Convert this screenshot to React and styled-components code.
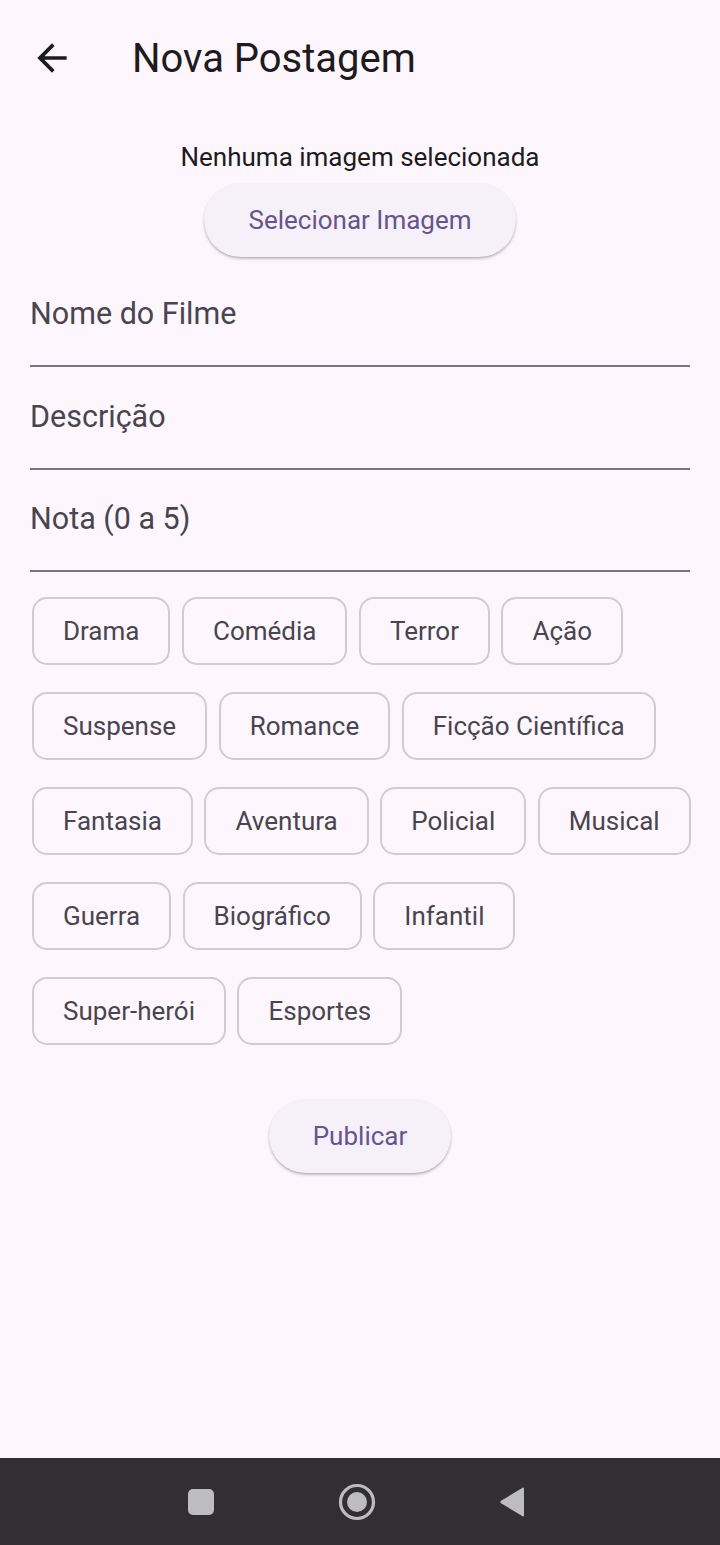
import React from "react";
import styled, { createGlobalStyle } from "styled-components";

const Global = createGlobalStyle`
  html, body { margin: 0; padding: 0; background: #FDF7FD; }
  body { font-family: Roboto, "Noto Sans", "Liberation Sans", sans-serif; -webkit-font-smoothing: antialiased; }
  #root { min-height: 100vh; }
`;

const Screen = styled.div`
  width: 720px;
  min-height: 1545px;
  display: flex;
  flex-direction: column;
  background: #FDF7FD;
`;

const AppBar = styled.header`
  height: 116px;
  display: flex;
  align-items: center;
  padding-left: 30px;
  box-sizing: border-box;
`;

const BackButton = styled.button`
  width: 44px;
  height: 44px;
  padding: 0;
  border: none;
  background: transparent;
  display: flex;
  align-items: center;
  justify-content: center;
  color: #1D1B20;
`;

const Title = styled.h1`
  margin: 0 0 0 58px;
  font-size: 40px;
  font-weight: 400;
  color: #1D1B20;
  letter-spacing: 0;
`;

const Body = styled.main`
  display: flex;
  flex-direction: column;
  padding: 0 30px;
`;

const ImageStatus = styled.p`
  margin: 22px 0 0;
  text-align: center;
  font-size: 26px;
  line-height: 38px;
  color: #1D1B20;
`;

const PillButton = styled.button`
  align-self: center;
  height: 74px;
  padding: 0 44px;
  border: none;
  border-radius: 37px;
  background: #F6F0F8;
  color: #65558F;
  font-family: Roboto, "Noto Sans", sans-serif;
  font-size: 26px;
  font-weight: 400;
  box-shadow: 0 2px 3px rgba(0, 0, 0, 0.22), 0 1px 1px rgba(0, 0, 0, 0.08);
  margin-top: ${(p) => p.$mt || 0}px;
`;

const Field = styled.div`
  height: 102.5px;
  display: flex;
  align-items: center;
  border-bottom: 2px solid #7A757F;
  box-sizing: border-box;
  margin-top: ${(p) => p.$mt || 0}px;
`;

const FieldLabel = styled.span`
  font-size: 30.5px;
  color: #49454F;
  padding-bottom: 2px;
`;

const ChipWrap = styled.div`
  display: flex;
  flex-wrap: wrap;
  column-gap: 11.5px;
  row-gap: 27px;
  margin: 25px -6px 0 0;
  padding-left: 2px;
`;

const Chip = styled.div`
  height: 68px;
  box-sizing: border-box;
  padding: 0 29px;
  border: 2px solid #D2CBD3;
  border-radius: 15px;
  display: flex;
  align-items: center;
  font-size: 26px;
  color: #49454F;
`;

const NavBar = styled.nav`
  margin-top: auto;
  height: 87px;
  background: #322F34;
  display: flex;
  align-items: center;
  justify-content: center;
  padding-right: 6px;
`;

const NavSlot = styled.div`
  width: 156px;
  display: flex;
  justify-content: center;
  align-items: center;
`;

const genres = [
  "Drama", "Comédia", "Terror", "Ação", "Suspense", "Romance",
  "Ficção Científica", "Fantasia", "Aventura", "Policial", "Musical",
  "Guerra", "Biográfico", "Infantil", "Super-herói", "Esportes",
];

export default function App() {
  return (
    <>
      <Global />
      <Screen>
        <AppBar>
          <BackButton aria-label="Voltar">
            <svg width="44" height="44" viewBox="0 0 24 24" fill="currentColor">
              <path d="M20 11H7.83l5.59-5.59L12 4l-8 8 8 8 1.41-1.41L7.83 13H20v-2z" />
            </svg>
          </BackButton>
          <Title>Nova Postagem</Title>
        </AppBar>
        <Body>
          <ImageStatus>Nenhuma imagem selecionada</ImageStatus>
          <PillButton $mt={7}>Selecionar Imagem</PillButton>
          <Field $mt={7.5}><FieldLabel>Nome do Filme</FieldLabel></Field>
          <Field><FieldLabel>Descrição</FieldLabel></Field>
          <Field><FieldLabel>Nota (0 a 5)</FieldLabel></Field>
          <ChipWrap>
            {genres.map((g) => (
              <Chip key={g}>{g}</Chip>
            ))}
          </ChipWrap>
          <PillButton $mt={54}>Publicar</PillButton>
        </Body>
        <NavBar>
          <NavSlot>
            <svg width="28" height="28" viewBox="0 0 28 28">
              <rect x="1" y="1" width="26" height="26" rx="5" fill="#BDBCBE" />
            </svg>
          </NavSlot>
          <NavSlot>
            <svg width="40" height="40" viewBox="0 0 40 40">
              <circle cx="20" cy="20" r="16.5" fill="none" stroke="#BDBCBE" strokeWidth="3.2" />
              <circle cx="20" cy="20" r="10" fill="#BDBCBE" />
            </svg>
          </NavSlot>
          <NavSlot>
            <svg width="30" height="32" viewBox="0 0 30 32">
              <path d="M26 2.5 L26 29.5 Q26 31 24.6 30.2 L3 17.2 Q1.6 16 3 14.8 L24.6 1.8 Q26 1 26 2.5 Z" fill="#BDBCBE" />
            </svg>
          </NavSlot>
        </NavBar>
      </Screen>
    </>
  );
}
